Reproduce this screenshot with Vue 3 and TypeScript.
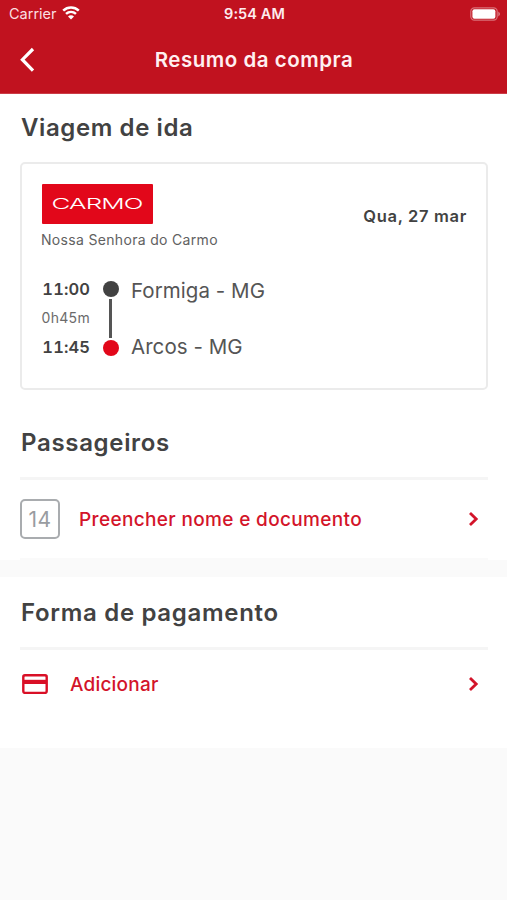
<script setup lang="ts">
interface Stop {
  time: string
  place: string
}

const trip = {
  company: 'Nossa Senhora do Carmo',
  date: 'Qua, 27 mar',
  duration: '0h45m',
  departure: { time: '11:00', place: 'Formiga - MG' } as Stop,
  arrival: { time: '11:45', place: 'Arcos - MG' } as Stop,
}
const seat = 14
</script>

<template>
  <main class="screen">
    <header class="top">
      <div class="status">
        <div class="carrier">
          <span>Carrier</span>
          <svg class="wifi" viewBox="0 0 18 14" width="18" height="14">
            <path d="M1.2 4.7C5.7.5 12.3.5 16.8 4.7M4 7.9c2.9-2.7 7.1-2.7 10 0" fill="none" stroke="#fff" stroke-width="2.5" />
            <path d="M9 13.6 6 10.4c1.7-1.4 4.3-1.4 6 0z" fill="#fff" />
          </svg>
        </div>
        <span class="clock">9:54 AM</span>
        <svg class="battery" viewBox="0 0 31 14" width="31" height="14">
          <rect x=".8" y=".8" width="26.4" height="12.4" rx="3.6" fill="none" stroke="#fff" stroke-opacity=".4" stroke-width="1.2" />
          <rect x="2.4" y="2.2" width="23" height="9.6" rx="2" fill="#fff" />
          <path d="M28.4 4.6q3 2.4 0 4.8z" fill="#fff" fill-opacity=".5" />
        </svg>
      </div>
      <div class="nav">
        <svg class="back" viewBox="0 0 16 26" width="16" height="26">
          <path d="M14 2 3.4 12.7 14 23.6" fill="none" stroke="#fff" stroke-width="3.2" />
        </svg>
        <h1>Resumo da compra</h1>
      </div>
    </header>

    <section class="trip">
      <h2>Viagem de ida</h2>
      <article class="card">
        <div class="card-head">
          <div class="brand">
            <svg class="logo" viewBox="0 0 111 40" width="111" height="40">
              <rect width="111" height="40" rx="1" fill="#e2071a" />
              <text x="9.5" y="25.4" textLength="91" lengthAdjust="spacingAndGlyphs">CARMO</text>
            </svg>
            <span class="company">{{ trip.company }}</span>
          </div>
          <span class="date">{{ trip.date }}</span>
        </div>
        <div class="route">
          <div class="times">
            <b>{{ trip.departure.time }}</b>
            <span>{{ trip.duration }}</span>
            <b>{{ trip.arrival.time }}</b>
          </div>
          <div class="track">
            <i class="dot"></i>
            <i class="line"></i>
            <i class="dot end"></i>
          </div>
          <div class="places">
            <span>{{ trip.departure.place }}</span>
            <span>{{ trip.arrival.place }}</span>
          </div>
        </div>
      </article>
    </section>

    <section class="passengers">
      <h2>Passageiros</h2>
      <div class="row">
        <span class="seat">{{ seat }}</span>
        <span class="action fill">Preencher nome e documento</span>
        <svg class="chev" viewBox="0 0 12 16" width="12" height="16">
          <path d="m2 2 6.2 6L2 14" fill="none" stroke="#d3142a" stroke-width="2.8" />
        </svg>
      </div>
    </section>

    <section class="payment">
      <h2>Forma de pagamento</h2>
      <div class="row">
        <svg class="credit" viewBox="0 0 26 20" width="26" height="20">
          <rect x="1.3" y="1.3" width="23.4" height="17.6" rx="1.6" fill="none" stroke="#d90f26" stroke-width="2.4" />
          <path d="M1 7.9h24" stroke="#d90f26" stroke-width="4.2" />
        </svg>
        <span class="action add">Adicionar</span>
        <svg class="chev" viewBox="0 0 12 16" width="12" height="16">
          <path d="m2 2 6.2 6L2 14" fill="none" stroke="#d3142a" stroke-width="2.8" />
        </svg>
      </div>
    </section>
  </main>
</template>

<style>
body {
  margin: 0;
  background: #fafafa;
}
</style>

<style scoped>
* {
  box-sizing: border-box;
}
.screen {
  height: 900px;
  background: #fafafa;
  font-family: Inter, "Liberation Sans", sans-serif;
  color: #424242;
  overflow: hidden;
}
h1,
h2 {
  margin: 0;
  font-weight: 600;
  white-space: nowrap;
}
span,
b {
  white-space: nowrap;
}
svg {
  display: block;
  flex: none;
}
.top {
  height: 94px;
  background: #c1121f;
  border-bottom: 1px solid #cb3c47;
  color: #fff;
}
.status {
  height: 27px;
  padding: 0 7px 0 9px;
  display: grid;
  grid-template-columns: 1fr auto 1fr;
  align-items: center;
}
.carrier {
  display: flex;
  align-items: center;
  gap: 5px;
  font-size: 14.5px;
  color: #fbdfe1;
}
.wifi {
  margin-top: -2px;
}
.clock {
  font-size: 14.5px;
  font-weight: 600;
  letter-spacing: 0.1px;
  color: #fdecee;
}
.battery {
  justify-self: end;
  margin-right: -1px;
}
.nav {
  height: 66px;
  display: grid;
  grid-template-columns: 1fr auto 1fr;
  align-items: center;
  padding: 0 18px 0 19px;
}
h1 {
  font-size: 20.5px;
  line-height: 24px;
  color: #fff0f1;
  letter-spacing: 0.52px;
}
h2 {
  font-size: 24px;
  line-height: 30px;
  letter-spacing: 0.68px;
  padding-left: 1px;
}
.trip {
  height: 316px;
  padding: 19px 19px 0 20px;
  background: #fff;
}
.trip h2 {
  letter-spacing: 0.6px;
}
.card {
  height: 228px;
  margin-top: 19px;
  padding: 20px 19px 0 20px;
  border: 2px solid #ebebeb;
  border-radius: 5px;
}
.card-head {
  display: flex;
  justify-content: space-between;
}
.logo text {
  font-family: Inter, sans-serif;
  font-size: 14.6px;
  font-weight: 300;
  letter-spacing: -0.5px;
  fill: #fff;
}
.company {
  display: block;
  margin-top: 7px;
  margin-left: -1px;
  font-size: 14px;
  line-height: 18px;
  color: #616161;
  letter-spacing: 0.32px;
}
.date {
  margin-top: 22px;
  font-size: 16.5px;
  line-height: 20px;
  font-weight: 600;
  letter-spacing: 0.68px;
}
.route {
  display: flex;
  margin-top: 29px;
}
.times {
  width: 49px;
  margin-left: -1px;
  display: flex;
  flex-direction: column;
  align-items: flex-end;
}
.times b {
  font-size: 16.5px;
  line-height: 22px;
  font-weight: 600;
  font-variant-numeric: tabular-nums;
  letter-spacing: 0.1px;
}
.times span {
  font-size: 14px;
  line-height: 20px;
  margin: 8px 0;
  color: #6b6b6b;
  letter-spacing: 0.3px;
}
.track {
  width: 17px;
  margin-left: 12px;
  padding-top: 3px;
  display: flex;
  flex-direction: column;
  align-items: center;
}
.dot {
  width: 16px;
  height: 16px;
  border-radius: 50%;
  background: #424242;
}
.dot.end {
  background: #e2071a;
}
.line {
  width: 3px;
  height: 39px;
  margin: 2px 0;
  background: #555;
}
.places {
  display: flex;
  flex-direction: column;
  margin-left: 12px;
  gap: 30px;
  font-size: 20.5px;
  line-height: 26px;
  letter-spacing: 0.05px;
  color: #555;
}
.passengers {
  height: 150px;
  padding: 18px 19px 0 20px;
  background: #fff;
}
.row {
  display: flex;
  align-items: center;
  border-top: 3px solid #f5f5f5;
}
.passengers .row {
  height: 83px;
  margin-top: 19px;
  border-bottom: 2px solid #fafafa;
}
.seat {
  width: 40px;
  height: 40px;
  border: 2px solid #a9acaf;
  border-radius: 5px;
  display: flex;
  align-items: center;
  justify-content: center;
  font-size: 21px;
  letter-spacing: 0.5px;
  color: #999ca1;
}
.action {
  color: #d3142a;
  font-weight: 500;
  font-size: 19px;
  line-height: 24px;
  letter-spacing: 0.35px;
}
.fill {
  margin-left: 19px;
  padding-top: 1px;
}
.chev {
  margin-left: auto;
  margin-right: 8px;
}
.payment {
  height: 171px;
  margin-top: 17px;
  padding: 21px 19px 0 20px;
  background: #fff;
}
.payment .row {
  height: 71px;
  margin-top: 19px;
}
.credit {
  margin-left: 2px;
}
.add {
  margin-left: 22px;
  padding-top: 1px;
  letter-spacing: 0.2px;
}
</style>
